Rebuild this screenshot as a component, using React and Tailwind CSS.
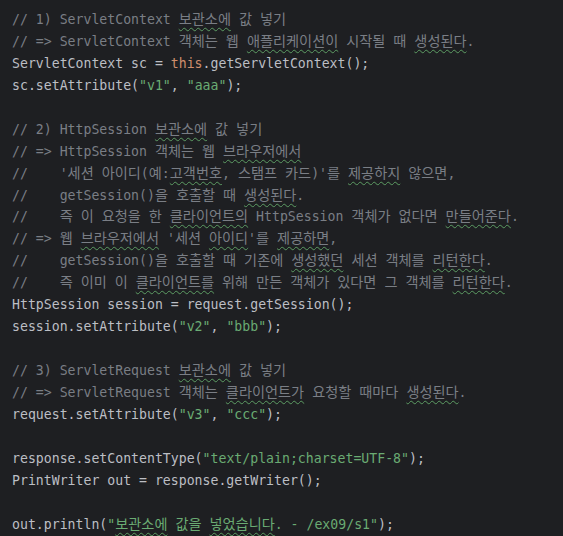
import { Children } from 'react';

// hangul runs get a slightly bigger size so they take the same width as in the editor
const ko = (children) =>
  Children.map(children, (child) => {
    if (typeof child !== 'string') return child;
    return child.split(/([\uac00-\ud7a3]+)/).map((part, i) =>
      /[\uac00-\ud7a3]/.test(part) ? (
        <span key={i} className="text-[14.2px]">{part}</span>
      ) : (
        part
      )
    );
  });

const Cm = ({ children }) => <span className="text-[#7a7e85]">{ko(children)}</span>;
const Str = ({ children }) => <span className="text-[#6aab73]">{ko(children)}</span>;
const Kw = ({ children }) => <span className="text-[#cf8e6d]">{children}</span>;
const Typo = ({ children }) => (
  <span className="underline decoration-wavy decoration-[#5c9c63] decoration-1 underline-offset-[3px]">
    {ko(children)}
  </span>
);

const Line = ({ children }) => <div className="h-[21.95px] whitespace-pre">{children || ' '}</div>;

export default function App() {
  return (
    <div
      className="w-[563px] h-[536px] overflow-hidden bg-[#1e1f22] text-[#bcbec4] pl-3 pt-[9px] text-[13.2px] leading-[21.95px]"
      style={{ fontFamily: '"DejaVu Sans Mono", "Noto Sans CJK KR", monospace' }}
    >
      <Line><Cm>// 1) ServletContext <Typo>보관소에</Typo> 값 넣기</Cm></Line>
      <Line><Cm>// =&gt; ServletContext 객체는 웹 <Typo>애플리케이션이</Typo> 시작될 때 <Typo>생성된다</Typo>.</Cm></Line>
      <Line>ServletContext sc = <Kw>this</Kw>.getServletContext();</Line>
      <Line>sc.setAttribute(<Str>"v1"</Str>, <Str>"aaa"</Str>);</Line>
      <Line />
      <Line><Cm>// 2) HttpSession <Typo>보관소에</Typo> 값 넣기</Cm></Line>
      <Line><Cm>// =&gt; HttpSession 객체는 웹 <Typo>브라우저에서</Typo></Cm></Line>
      <Line><Cm>//    '세션 아이디(예:<Typo>고객번호</Typo>, 스탬프 카드)'를 <Typo>제공하지</Typo> 않으면,</Cm></Line>
      <Line><Cm>//    getSession()을 호출할 때 <Typo>생성된다</Typo>.</Cm></Line>
      <Line><Cm>//    즉 이 요청을 한 <Typo>클라이언트의</Typo> HttpSession 객체가 없다면 <Typo>만들어준다</Typo>.</Cm></Line>
      <Line><Cm>// =&gt; 웹 <Typo>브라우저에서</Typo> '세션 <Typo>아이디</Typo>'를 <Typo>제공하면</Typo>,</Cm></Line>
      <Line><Cm>//    getSession()을 호출할 때 기존에 <Typo>생성했던</Typo> 세션 객체를 <Typo>리턴한다</Typo>.</Cm></Line>
      <Line><Cm>//    즉 이미 이 <Typo>클라이언트를</Typo> 위해 만든 객체가 있다면 그 객체를 <Typo>리턴한다</Typo>.</Cm></Line>
      <Line>HttpSession session = request.getSession();</Line>
      <Line>session.setAttribute(<Str>"v2"</Str>, <Str>"bbb"</Str>);</Line>
      <Line />
      <Line><Cm>// 3) ServletRequest <Typo>보관소에</Typo> 값 넣기</Cm></Line>
      <Line><Cm>// =&gt; ServletRequest 객체는 <Typo>클라이언트가</Typo> 요청할 때마다 <Typo>생성된다</Typo>.</Cm></Line>
      <Line>request.setAttribute(<Str>"v3"</Str>, <Str>"ccc"</Str>);</Line>
      <Line />
      <Line>response.setContentType(<Str>"text/plain;charset=UTF-8"</Str>);</Line>
      <Line>PrintWriter out = response.getWriter();</Line>
      <Line />
      <Line>out.println(<Str>"<Typo>보관소에</Typo> 값을 <Typo>넣었습니다</Typo>. - /ex09/s1"</Str>);</Line>
    </div>
  );
}
